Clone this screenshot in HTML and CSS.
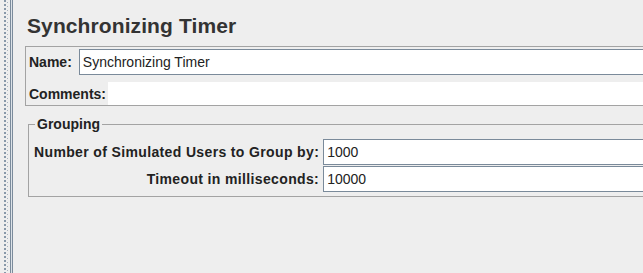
FILE: index.html
```html
<!DOCTYPE html>
<html lang="en">
<head>
    <meta charset="UTF-8">
    <title>Synchronizing Timer</title>
    <link rel="stylesheet" href="styles.css">
</head>
<body>
    <div class="app">
        <div class="splitter"></div>

        <div class="editor">
            <h1 class="editor-title">Synchronizing Timer</h1>

            <div class="name-panel">
                <div class="name-row">
                    <label class="field-label">Name:</label>
                    <div class="text-field">Synchronizing Timer</div>
                </div>
                <div class="comments-row">
                    <label class="field-label">Comments:</label>
                    <div class="comments-area"></div>
                </div>
            </div>

            <fieldset class="group-box">
                <legend class="group-title">Grouping</legend>
                <div class="form-grid">
                    <label class="field-label grid-label">Number of Simulated Users to Group by:</label>
                    <div class="text-field">1000</div>
                    <label class="field-label grid-label">Timeout in milliseconds:</label>
                    <div class="text-field">10000</div>
                </div>
            </fieldset>
        </div>
    </div>
</body>
</html>
```

FILE: styles.css
```css
* {
    margin: 0;
    padding: 0;
    box-sizing: border-box;
}

body {
    font-family: 'Liberation Sans', Arial, sans-serif;
    background: #eeeeee;
    color: #222;
    overflow: hidden;
}

.app {
    height: 100vh;
    display: flex;
}

/* left split pane handle */
.splitter {
    width: 13px;
    flex: none;
    background:
        linear-gradient(to right, transparent 10px, #7b8b9b 10px 11px, #dce2e8 11px 12px, #7b8b9b 12px 13px),
        linear-gradient(#8898a9 0 2px, transparent 2px) 4px 0 / 2px 4px repeat-y,
        linear-gradient(transparent 2px, #a9b4bf 2px 3px, transparent 3px) 7px 0 / 1px 4px repeat-y,
        #eeeeee;
}

.editor {
    flex: 1;
    overflow: hidden;
    padding-top: 14px;
}

.editor-title {
    font-size: 21px;
    line-height: 24px;
    font-weight: 700;
    letter-spacing: 0.1px;
    color: #333;
    margin-left: 14px;
    margin-bottom: 8px;
}

.field-label {
    font-size: 14px;
    line-height: 16px;
    font-weight: 700;
    white-space: nowrap;
}

.text-field {
    flex: 1;
    height: 26px;
    background: #fff;
    border: 1px solid #7a8a9a;
    padding: 4px 3px 0;
    font-size: 14px;
    line-height: 16px;
    color: #222;
    white-space: nowrap;
}

.name-panel {
    margin-left: 12px;
    margin-right: -20px;
    border: 1px solid #a3a3a3;
    padding: 2px 0 0 3px;
}

.name-row {
    display: flex;
    align-items: center;
    gap: 7px;
}

.comments-row {
    display: flex;
    align-items: center;
    gap: 2px;
    margin-top: 7px;
}

.comments-area {
    flex: 1;
    height: 23px;
    background: #fff;
}

.group-box {
    margin: 10px -20px 0 15px;
    border: 1px solid #a3a3a3;
    padding: 7px 0 4px 5px;
}

.group-title {
    margin-left: 1px;
    padding: 0 2px;
    font-size: 14px;
    line-height: 16px;
    font-weight: 700;
}

.form-grid {
    display: grid;
    grid-template-columns: auto 1fr;
    column-gap: 4px;
    row-gap: 1px;
    align-items: center;
}

.grid-label {
    text-align: right;
    letter-spacing: 0.36px;
}
```
